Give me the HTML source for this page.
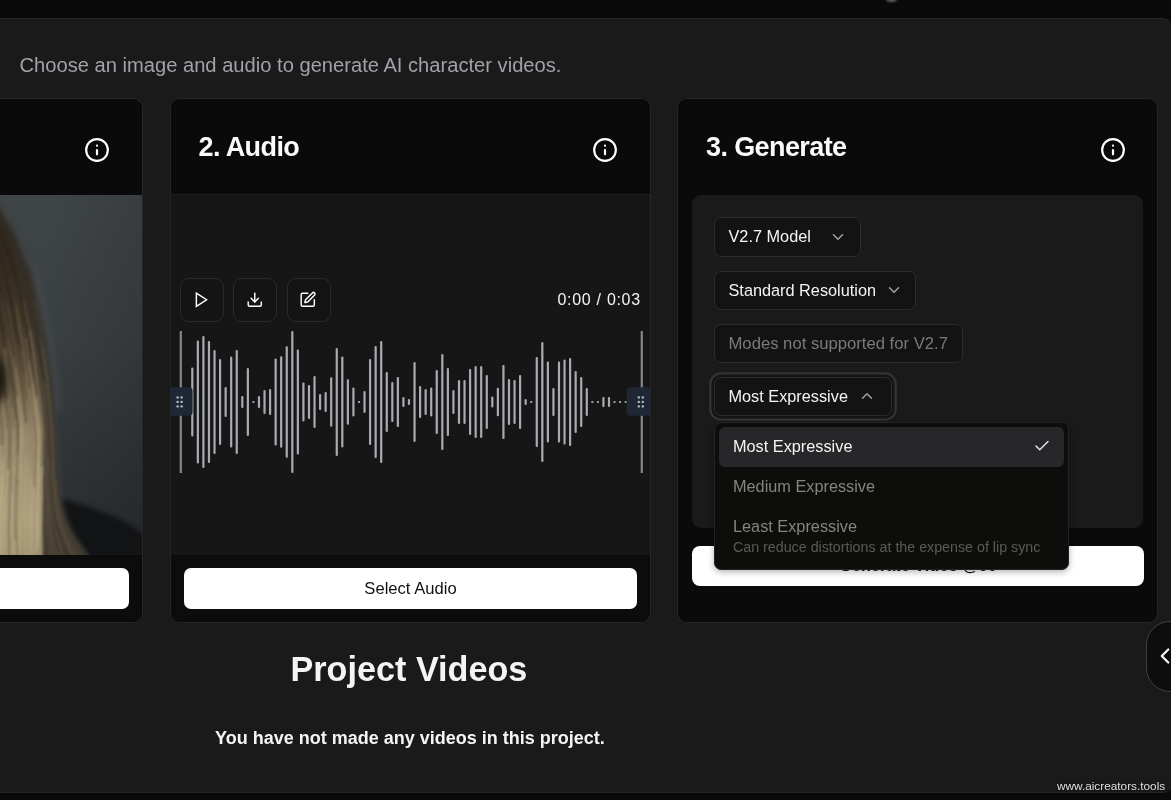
<!DOCTYPE html>
<html><head><meta charset="utf-8">
<style>
*{box-sizing:border-box;margin:0;padding:0}
html,body{width:1171px;height:800px;overflow:hidden;-webkit-font-smoothing:antialiased;background:#0a0a0a;font-family:"Liberation Sans",sans-serif;color:#fff}
.abs{position:absolute}
#main{position:absolute;left:-20px;top:18px;width:1192px;height:775px;background:#1a1a1a;border-top:1px solid #262626;border-bottom:1px solid #242424;border-radius:0 9px 9px 0}
.sub{position:absolute;left:19.5px;top:52.5px;font-size:20.15px;color:#a1a1aa;white-space:nowrap;line-height:24px}
.card{position:absolute;top:98px;width:481px;height:525px;border:1px solid #262626;border-radius:10px;overflow:hidden;background:#0c0c0c}
.hdr{position:absolute;left:0;top:0;right:0;height:95.5px;background:#0a0a0a}
.ttl{position:absolute;top:130.5px;font-size:27px;font-weight:700;letter-spacing:-0.6px;white-space:nowrap;line-height:32px;color:#fafafa}
.foot{position:absolute;left:0;right:0;top:456px;bottom:0;background:#0c0c0c}
.wbtn{position:absolute;left:13px;right:13px;top:13px;height:40.5px;background:#fff;border-radius:7px;color:#111;font-size:16.6px;text-align:center;line-height:41.5px}
.ctl{position:absolute;top:277.5px;width:44px;height:44px;border:1px solid #2a2a2a;border-radius:9px;background:#141414}
.sel{position:absolute;left:714px;height:39.5px;border:1px solid #2c2c2c;border-radius:7px;background:#131313;font-size:16.3px;line-height:37px;padding-left:13.5px;white-space:nowrap;color:#f4f4f5}
.ic{position:absolute;overflow:visible}
</style></head><body>
<div id="root" style="position:absolute;left:0;top:0;width:1171px;height:800px;overflow:hidden;will-change:transform">
<div class="abs" style="left:885.5px;top:-3px;width:11px;height:4.5px;border-radius:50%;background:#5a5f6a;filter:blur(1px)"></div>
<div id="main"></div>
<div class="sub">Choose an image and audio to generate AI character videos.</div>

<!-- Card 1 -->
<div class="card" style="left:-338.5px">
  <div class="hdr"></div>
  <div class="abs" style="left:0;top:96px;width:480px;height:360px;overflow:hidden">
    <svg width="480" height="360" viewBox="0 0 480 360" style="position:absolute;left:0;top:0">
<defs>
<linearGradient id="bgG" x1="0" y1="0" x2="0" y2="1"><stop offset="0" stop-color="#404547"/><stop offset="0.4" stop-color="#3a3f42"/><stop offset="0.75" stop-color="#303437"/><stop offset="1" stop-color="#292c30"/></linearGradient>
<linearGradient id="vigG" x1="0" y1="0" x2="1" y2="0"><stop offset="0.8" stop-color="#000" stop-opacity="0"/><stop offset="1" stop-color="#000" stop-opacity="0.12"/></linearGradient>
<linearGradient id="hairG" gradientUnits="userSpaceOnUse" x1="0" y1="0" x2="0" y2="360"><stop offset="0.000" stop-color="#2c251d"/><stop offset="0.181" stop-color="#33291f"/><stop offset="0.347" stop-color="#463b2c"/><stop offset="0.458" stop-color="#5a4d3a"/><stop offset="0.569" stop-color="#7a6b51"/><stop offset="0.653" stop-color="#94856a"/><stop offset="0.764" stop-color="#a89978"/><stop offset="0.903" stop-color="#b3a480"/><stop offset="1.000" stop-color="#a99a77"/></linearGradient>
<linearGradient id="frG" gradientUnits="userSpaceOnUse" x1="0" y1="0" x2="0" y2="360"><stop offset="0" stop-color="#302a22"/><stop offset="0.5" stop-color="#3a342b"/><stop offset="1" stop-color="#40392e"/></linearGradient>
<filter color-interpolation-filters="sRGB" id="bl1" x="-20%" y="-20%" width="140%" height="140%"><feGaussianBlur stdDeviation="1.3"/></filter>
<filter color-interpolation-filters="sRGB" id="bl2" x="-20%" y="-20%" width="140%" height="140%"><feGaussianBlur stdDeviation="2.4"/></filter>
<filter color-interpolation-filters="sRGB" id="bl05" x="-20%" y="-20%" width="140%" height="140%"><feGaussianBlur stdDeviation="1.2"/></filter>
<filter color-interpolation-filters="sRGB" id="bl3" x="-50%" y="-50%" width="200%" height="200%"><feGaussianBlur stdDeviation="4"/></filter>
<clipPath id="hclip"><path d="M280 -4 L327.5 -4.0 C328.2 -2.7 330.4 1.3 331.9 4.0 C333.4 6.7 334.8 9.3 336.3 12.0 C337.8 14.7 339.4 17.3 341.0 20.0 C342.5 22.7 344.2 25.3 345.9 28.0 C347.5 30.7 349.4 33.3 350.8 36.0 C352.2 38.7 353.2 41.3 354.3 44.0 C355.4 46.7 356.4 49.3 357.4 52.0 C358.4 54.7 359.4 57.3 360.5 60.0 C361.6 62.7 363.0 65.3 364.2 68.0 C365.4 70.7 366.8 73.3 367.7 76.0 C368.6 78.7 368.9 81.3 369.5 84.0 C370.1 86.7 370.7 89.3 371.3 92.0 C371.9 94.7 372.5 97.3 373.1 100.0 C373.7 102.7 374.3 105.3 374.9 108.0 C375.5 110.7 376.1 113.3 376.7 116.0 C377.3 118.7 377.8 121.3 378.3 124.0 C378.8 126.7 379.4 129.3 379.9 132.0 C380.4 134.7 381.0 137.3 381.5 140.0 C382.0 142.7 382.6 145.3 383.1 148.0 C383.6 150.7 384.0 153.3 384.4 156.0 C384.8 158.7 385.1 161.3 385.5 164.0 C385.9 166.7 386.3 169.3 386.6 172.0 C387.0 174.7 387.4 177.3 387.8 180.0 C388.1 182.7 388.5 185.3 388.7 188.0 C389.0 190.7 389.2 193.3 389.4 196.0 C389.6 198.7 389.8 201.3 390.0 204.0 C390.2 206.7 390.4 209.3 390.7 212.0 C390.9 214.7 391.1 217.3 391.3 220.0 C391.5 222.7 391.7 225.3 391.9 228.0 C392.1 230.7 392.4 233.3 392.6 236.0 C392.7 238.7 392.9 241.3 393.0 244.0 C393.2 246.7 393.4 249.3 393.5 252.0 C393.7 254.7 393.8 257.3 394.0 260.0 C394.2 262.7 394.3 265.3 394.5 268.0 C394.6 270.7 394.8 273.3 395.0 276.0 C395.1 278.7 395.2 281.3 395.4 284.0 C395.7 286.7 396.0 289.3 396.3 292.0 C396.6 294.7 397.0 297.3 397.3 300.0 C397.6 302.7 397.8 305.3 398.3 308.0 C398.8 310.7 399.6 313.3 400.3 316.0 C401.0 318.7 401.8 321.3 402.7 324.0 C403.6 326.7 404.4 329.3 405.7 332.0 C407.0 334.7 408.8 337.3 410.4 340.0 C412.0 342.7 413.4 345.3 415.2 348.0 C417.0 350.7 419.4 353.3 421.1 356.0 C422.8 358.7 424.8 362.7 425.5 364.0 L280 366 Z"/></clipPath>
</defs>
<rect width="480" height="360" fill="url(#bgG)"/>
<rect width="480" height="360" fill="url(#vigG)"/>
<path d="M393 303 C410 306 430 313 452 322 C466 328 476 335 482 342 L482 362 L412 362 C406 340 398 320 393 303Z" fill="#121315" filter="url(#bl2)"/>
<path d="M280 -4 L329.5 -4.0 C330.2 -2.7 332.4 1.3 333.9 4.0 C335.4 6.7 336.8 9.3 338.3 12.0 C339.8 14.7 341.4 17.3 343.0 20.0 C344.5 22.7 346.2 25.3 347.9 28.0 C349.5 30.7 351.4 33.3 352.8 36.0 C354.2 38.7 355.2 41.3 356.3 44.0 C357.4 46.7 358.4 49.3 359.4 52.0 C360.4 54.7 360.4 57.3 362.5 60.0 C364.6 62.7 370.0 65.3 372.2 68.0 C374.4 70.7 374.8 73.3 375.7 76.0 C376.6 78.7 376.9 81.3 377.5 84.0 C378.1 86.7 378.7 89.3 379.3 92.0 C379.9 94.7 380.5 97.3 381.1 100.0 C381.7 102.7 382.3 105.3 382.9 108.0 C383.5 110.7 384.1 113.3 384.7 116.0 C385.3 118.7 385.8 121.3 386.3 124.0 C386.8 126.7 387.4 129.3 387.9 132.0 C388.4 134.7 389.0 137.3 389.5 140.0 C390.0 142.7 390.6 145.3 391.1 148.0 C391.6 150.7 392.0 153.3 392.4 156.0 C392.8 158.7 393.1 161.3 393.5 164.0 C393.9 166.7 394.3 169.3 394.6 172.0 C395.0 174.7 395.4 177.3 395.8 180.0 C396.1 182.7 396.5 185.3 396.7 188.0 C397.0 190.7 397.2 193.3 397.4 196.0 C397.6 198.7 397.8 201.3 398.0 204.0 C398.2 206.7 399.4 209.3 398.7 212.0 C397.9 214.7 394.1 217.3 393.3 220.0 C392.5 222.7 393.7 225.3 393.9 228.0 C394.1 230.7 394.4 233.3 394.6 236.0 C394.7 238.7 394.9 241.3 395.0 244.0 C395.2 246.7 395.4 249.3 395.5 252.0 C395.7 254.7 395.8 257.3 396.0 260.0 C396.2 262.7 396.3 265.3 396.5 268.0 C396.6 270.7 396.8 273.3 397.0 276.0 C397.1 278.7 397.2 281.3 397.4 284.0 C397.7 286.7 398.0 289.3 398.3 292.0 C398.6 294.7 399.0 297.3 399.3 300.0 C399.6 302.7 399.8 305.3 400.3 308.0 C400.8 310.7 401.6 313.3 402.3 316.0 C403.0 318.7 403.8 321.3 404.7 324.0 C405.6 326.7 406.4 329.3 407.7 332.0 C409.0 334.7 410.8 337.3 412.4 340.0 C414.0 342.7 415.4 345.3 417.2 348.0 C419.0 350.7 421.4 353.3 423.1 356.0 C424.8 358.7 426.8 362.7 427.5 364.0 L280 366 Z" fill="#4a4e4f" opacity="0.45" filter="url(#bl2)"/>
<path d="M280 -4 L327.5 -4.0 C328.2 -2.7 330.4 1.3 331.9 4.0 C333.4 6.7 334.8 9.3 336.3 12.0 C337.8 14.7 339.4 17.3 341.0 20.0 C342.5 22.7 344.2 25.3 345.9 28.0 C347.5 30.7 349.4 33.3 350.8 36.0 C352.2 38.7 353.2 41.3 354.3 44.0 C355.4 46.7 356.4 49.3 357.4 52.0 C358.4 54.7 359.4 57.3 360.5 60.0 C361.6 62.7 363.0 65.3 364.2 68.0 C365.4 70.7 366.8 73.3 367.7 76.0 C368.6 78.7 368.9 81.3 369.5 84.0 C370.1 86.7 370.7 89.3 371.3 92.0 C371.9 94.7 372.5 97.3 373.1 100.0 C373.7 102.7 374.3 105.3 374.9 108.0 C375.5 110.7 376.1 113.3 376.7 116.0 C377.3 118.7 377.8 121.3 378.3 124.0 C378.8 126.7 379.4 129.3 379.9 132.0 C380.4 134.7 381.0 137.3 381.5 140.0 C382.0 142.7 382.6 145.3 383.1 148.0 C383.6 150.7 384.0 153.3 384.4 156.0 C384.8 158.7 385.1 161.3 385.5 164.0 C385.9 166.7 386.3 169.3 386.6 172.0 C387.0 174.7 387.4 177.3 387.8 180.0 C388.1 182.7 388.5 185.3 388.7 188.0 C389.0 190.7 389.2 193.3 389.4 196.0 C389.6 198.7 389.8 201.3 390.0 204.0 C390.2 206.7 390.4 209.3 390.7 212.0 C390.9 214.7 391.1 217.3 391.3 220.0 C391.5 222.7 391.7 225.3 391.9 228.0 C392.1 230.7 392.4 233.3 392.6 236.0 C392.7 238.7 392.9 241.3 393.0 244.0 C393.2 246.7 393.4 249.3 393.5 252.0 C393.7 254.7 393.8 257.3 394.0 260.0 C394.2 262.7 394.3 265.3 394.5 268.0 C394.6 270.7 394.8 273.3 395.0 276.0 C395.1 278.7 395.2 281.3 395.4 284.0 C395.7 286.7 396.0 289.3 396.3 292.0 C396.6 294.7 397.0 297.3 397.3 300.0 C397.6 302.7 397.8 305.3 398.3 308.0 C398.8 310.7 399.6 313.3 400.3 316.0 C401.0 318.7 401.8 321.3 402.7 324.0 C403.6 326.7 404.4 329.3 405.7 332.0 C407.0 334.7 408.8 337.3 410.4 340.0 C412.0 342.7 413.4 345.3 415.2 348.0 C417.0 350.7 419.4 353.3 421.1 356.0 C422.8 358.7 424.8 362.7 425.5 364.0 L280 366 Z" fill="url(#frG)" filter="url(#bl2)"/>
<path d="M280 -4 L324.4 -4.0 C324.8 -2.7 326.2 1.3 327.1 4.0 C328.1 6.7 329.2 9.3 330.3 12.0 C331.4 14.7 332.4 17.3 333.5 20.0 C334.6 22.7 335.6 25.3 336.7 28.0 C337.8 30.7 338.8 33.3 339.9 36.0 C341.0 38.7 342.0 41.3 343.1 44.0 C344.2 46.7 345.3 49.3 346.3 52.0 C347.3 54.7 348.2 57.3 349.1 60.0 C350.0 62.7 350.8 65.3 351.7 68.0 C352.5 70.7 353.4 73.3 354.2 76.0 C355.0 78.7 355.7 81.3 356.4 84.0 C357.1 86.7 357.6 89.3 358.2 92.0 C358.9 94.7 359.5 97.3 360.1 100.0 C360.7 102.7 361.3 105.3 361.9 108.0 C362.5 110.7 363.1 113.3 363.7 116.0 C364.2 118.7 364.6 121.3 365.1 124.0 C365.5 126.7 366.0 129.3 366.5 132.0 C366.9 134.7 367.4 137.3 367.9 140.0 C368.3 142.7 368.8 145.3 369.3 148.0 C369.7 150.7 370.2 153.3 370.6 156.0 C371.1 158.7 371.4 161.3 371.8 164.0 C372.1 166.7 372.5 169.3 372.9 172.0 C373.3 174.7 373.6 177.3 374.0 180.0 C374.4 182.7 374.7 185.3 375.1 188.0 C375.5 190.7 375.9 193.3 376.2 196.0 C376.6 198.7 377.0 201.3 377.4 204.0 C377.7 206.7 377.9 209.3 378.2 212.0 C378.5 214.7 378.7 217.3 379.0 220.0 C379.3 222.7 379.6 225.3 379.8 228.0 C380.0 230.7 380.4 233.3 380.5 236.0 C380.6 238.7 380.4 241.3 380.3 244.0 C380.3 246.7 380.2 249.3 380.2 252.0 C380.1 254.7 380.1 257.3 380.0 260.0 C379.9 262.7 379.9 265.3 379.8 268.0 C379.8 270.7 379.7 273.3 379.7 276.0 C379.6 278.7 379.6 281.3 379.5 284.0 C379.5 286.7 379.4 289.3 379.3 292.0 C379.3 294.7 379.2 297.3 379.1 300.0 C379.1 302.7 379.0 305.3 378.9 308.0 C378.9 310.7 378.8 313.3 378.7 316.0 C378.7 318.7 378.6 321.3 378.5 324.0 C378.5 326.7 378.5 329.3 378.5 332.0 C378.5 334.7 378.5 337.3 378.5 340.0 C378.5 342.7 378.5 345.3 378.5 348.0 C378.5 350.7 378.5 353.3 378.5 356.0 C378.5 358.7 378.5 362.7 378.5 364.0 L280 366 Z" fill="url(#hairG)" filter="url(#bl2)"/>
<g filter="url(#bl05)" fill="none" stroke-linecap="round" clip-path="url(#hclip)">
<path d="M351.3 163.5 C351.9 168.0 353.9 181.5 355.1 190.5 C356.3 199.5 357.7 208.4 358.5 217.4 C359.2 226.4 359.5 235.4 359.6 244.4 C359.8 253.4 359.5 262.3 359.4 271.3 C359.3 280.3 359.1 289.3 358.9 298.3 C358.8 307.2 358.6 316.2 358.4 325.2 C358.2 334.2 357.9 347.7 357.7 352.2" stroke="rgb(200,182,145)" stroke-width="2.3" opacity="0.22"/>
<path d="M296.1 3.0 C297.9 7.7 303.3 21.8 306.9 31.2 C310.5 40.6 314.7 50.0 317.8 59.4 C320.9 68.8 323.3 78.2 325.7 87.6 C328.0 96.9 330.0 106.3 331.9 115.7 C333.9 125.1 335.8 134.5 337.4 143.9 C338.9 153.3 339.9 162.7 341.3 172.1 C342.6 181.5 344.6 195.6 345.3 200.3" stroke="rgb(82,69,53)" stroke-width="1.7" opacity="0.21"/>
<path d="M360.5 251.2 C360.4 253.9 360.1 262.1 360.0 267.6 C359.9 273.0 360.0 278.5 359.9 284.0 C359.7 289.4 359.4 294.9 359.2 300.4 C359.0 305.8 358.7 311.3 358.7 316.8 C358.6 322.2 359.1 327.7 359.2 333.2 C359.3 338.7 359.2 344.1 359.2 349.6 C359.1 355.1 359.0 363.3 359.0 366.0" stroke="rgb(105,96,75)" stroke-width="1.3" opacity="0.27"/>
<path d="M317.1 11.8 C318.7 15.7 323.9 27.5 327.0 35.3 C330.1 43.2 332.9 51.0 335.6 58.9 C338.4 66.8 341.3 74.6 343.5 82.5 C345.7 90.3 347.3 98.2 348.8 106.0 C350.3 113.9 351.2 121.7 352.5 129.6 C353.9 137.4 355.5 145.3 356.9 153.1 C358.3 161.0 360.3 172.8 360.9 176.7" stroke="rgb(36,29,22)" stroke-width="1.6" opacity="0.42"/>
<path d="M371.2 185.1 C371.7 189.1 373.3 201.0 374.2 209.0 C375.1 216.9 376.3 224.8 376.8 232.8 C377.3 240.7 377.3 248.7 377.2 256.6 C377.2 264.5 376.9 272.5 376.6 280.4 C376.2 288.4 375.6 296.3 375.3 304.3 C375.1 312.2 375.0 320.1 375.0 328.1 C374.9 336.0 374.8 347.9 374.8 351.9" stroke="rgb(207,188,149)" stroke-width="1.2" opacity="0.38"/>
<path d="M341.0 128.7 C341.2 130.6 341.7 136.2 342.3 139.9 C343.0 143.7 344.2 147.4 344.8 151.2 C345.4 154.9 345.5 158.6 346.0 162.4 C346.5 166.1 347.3 169.9 347.9 173.6 C348.4 177.4 348.7 181.1 349.2 184.8 C349.7 188.6 350.2 192.3 350.9 196.1 C351.5 199.8 352.7 205.4 353.0 207.3" stroke="rgb(55,47,35)" stroke-width="2.4" opacity="0.27"/>
<path d="M353.5 112.2 C354.2 116.5 356.1 129.2 357.6 137.7 C359.1 146.2 361.3 154.6 362.6 163.1 C364.0 171.6 364.4 180.1 365.4 188.6 C366.4 197.1 367.7 205.5 368.7 214.0 C369.6 222.5 370.9 231.0 371.2 239.5 C371.5 248.0 370.5 256.4 370.2 264.9 C370.0 273.4 369.8 286.1 369.7 290.4" stroke="rgb(151,133,102)" stroke-width="1.9" opacity="0.22"/>
<path d="M362.5 176.4 C363.0 178.9 364.4 186.5 365.1 191.5 C365.8 196.5 366.2 201.6 366.7 206.6 C367.2 211.6 367.8 216.7 368.3 221.7 C368.8 226.8 369.8 231.8 369.9 236.8 C370.0 241.9 369.1 246.9 368.9 251.9 C368.7 257.0 368.6 262.0 368.6 267.0 C368.6 272.1 369.0 279.6 369.0 282.2" stroke="rgb(85,76,60)" stroke-width="1.2" opacity="0.25"/>
<path d="M346.7 281.5 C346.7 283.4 346.6 289.1 346.4 292.9 C346.3 296.7 346.0 300.5 345.8 304.2 C345.7 308.0 345.6 311.8 345.4 315.6 C345.2 319.4 344.9 323.2 344.8 326.9 C344.7 330.7 344.6 334.5 344.8 338.3 C344.9 342.1 345.7 345.9 345.7 349.7 C345.7 353.4 345.1 359.1 345.0 361.0" stroke="rgb(106,97,76)" stroke-width="2.3" opacity="0.26"/>
<path d="M329.1 81.0 C329.4 82.8 330.2 88.2 330.9 91.9 C331.7 95.5 332.7 99.1 333.6 102.8 C334.5 106.4 335.6 110.0 336.4 113.7 C337.3 117.3 338.0 120.9 338.7 124.6 C339.3 128.2 339.8 131.8 340.4 135.5 C340.9 139.1 341.3 142.7 341.9 146.4 C342.6 150.0 344.0 155.5 344.4 157.3" stroke="rgb(89,75,58)" stroke-width="1.4" opacity="0.20"/>
<path d="M308.8 8.7 C309.6 10.6 312.0 16.0 313.4 19.7 C314.8 23.3 315.9 26.9 317.3 30.6 C318.7 34.2 320.3 37.9 321.9 41.5 C323.5 45.1 325.4 48.8 326.8 52.4 C328.3 56.1 329.4 59.7 330.6 63.3 C331.8 67.0 332.7 70.6 333.8 74.3 C334.8 77.9 336.3 83.4 336.8 85.2" stroke="rgb(29,23,18)" stroke-width="1.0" opacity="0.23"/>
<path d="M379.4 272.2 C379.2 274.4 378.4 281.1 378.2 285.6 C378.0 290.0 378.5 294.5 378.5 299.0 C378.4 303.4 378.1 307.9 378.0 312.4 C377.9 316.8 378.0 321.3 377.9 325.8 C377.8 330.3 377.5 334.7 377.5 339.2 C377.6 343.7 378.2 348.1 378.2 352.6 C378.2 357.1 377.4 363.8 377.3 366.0" stroke="rgb(222,204,161)" stroke-width="2.4" opacity="0.36"/>
<path d="M345.1 208.1 C345.3 211.9 346.4 223.2 346.8 230.7 C347.1 238.2 347.1 245.7 347.2 253.2 C347.2 260.8 347.0 268.3 346.9 275.8 C346.8 283.3 346.6 290.8 346.4 298.3 C346.1 305.9 345.5 313.4 345.4 320.9 C345.2 328.4 345.6 335.9 345.6 343.4 C345.7 351.0 345.7 362.2 345.7 366.0" stroke="rgb(102,93,73)" stroke-width="1.5" opacity="0.34"/>
<path d="M347.7 178.7 C348.0 180.2 348.9 184.7 349.3 187.6 C349.8 190.6 350.1 193.5 350.5 196.5 C350.8 199.4 351.3 202.4 351.5 205.3 C351.8 208.3 351.8 211.2 352.1 214.2 C352.4 217.1 353.0 220.1 353.3 223.1 C353.6 226.0 353.9 229.0 354.1 231.9 C354.2 234.9 354.1 239.3 354.1 240.8" stroke="rgb(75,66,50)" stroke-width="2.2" opacity="0.22"/>
<path d="M371.9 176.4 C372.4 179.3 374.0 188.0 374.8 193.8 C375.6 199.7 376.1 205.5 376.8 211.3 C377.4 217.1 378.2 222.9 378.6 228.7 C379.1 234.6 379.4 240.4 379.4 246.2 C379.3 252.0 378.6 257.8 378.3 263.6 C378.1 269.5 377.9 275.3 377.7 281.1 C377.6 286.9 377.6 295.6 377.6 298.5" stroke="rgb(89,80,64)" stroke-width="1.2" opacity="0.24"/>
<path d="M335.7 194.6 C335.9 197.4 336.6 205.7 337.2 211.2 C337.8 216.7 338.8 222.3 339.2 227.8 C339.5 233.4 339.3 238.9 339.3 244.4 C339.2 250.0 339.2 255.5 339.2 261.0 C339.1 266.6 339.2 272.1 339.2 277.7 C339.2 283.2 339.0 288.7 338.9 294.3 C338.8 299.8 338.6 308.1 338.5 310.9" stroke="rgb(197,179,142)" stroke-width="1.4" opacity="0.33"/>
<path d="M362.8 143.9 C363.4 148.1 365.3 160.6 366.5 169.0 C367.8 177.3 369.3 185.7 370.3 194.1 C371.3 202.4 372.0 210.8 372.6 219.1 C373.2 227.5 373.7 235.9 373.9 244.2 C374.0 252.6 373.8 260.9 373.6 269.3 C373.5 277.7 373.1 286.0 372.9 294.4 C372.7 302.7 372.3 315.3 372.2 319.5" stroke="rgb(183,164,131)" stroke-width="1.7" opacity="0.34"/>
<path d="M366.0 250.1 C365.8 252.9 365.4 261.2 365.2 266.7 C365.1 272.2 364.9 277.7 364.9 283.2 C364.9 288.8 365.4 294.3 365.3 299.8 C365.2 305.3 364.2 310.8 364.1 316.3 C363.9 321.9 364.5 327.4 364.5 332.9 C364.6 338.4 364.4 343.9 364.4 349.4 C364.3 355.0 364.2 363.2 364.1 366.0" stroke="rgb(105,96,75)" stroke-width="1.1" opacity="0.20"/>
<path d="M304.2 -2.3 C305.8 1.8 310.5 14.3 313.7 22.6 C316.9 30.9 320.4 39.2 323.6 47.5 C326.8 55.8 330.2 64.1 332.7 72.4 C335.3 80.7 337.0 89.0 338.9 97.4 C340.9 105.7 342.8 114.0 344.4 122.3 C346.1 130.6 347.4 138.9 348.8 147.2 C350.2 155.5 352.1 168.0 352.7 172.1" stroke="rgb(34,28,21)" stroke-width="1.2" opacity="0.35"/>
<path d="M322.2 45.4 C322.8 46.6 324.6 50.3 325.4 52.8 C326.3 55.2 326.7 57.7 327.4 60.1 C328.2 62.6 329.1 65.1 329.9 67.5 C330.7 70.0 331.5 72.4 332.3 74.9 C333.2 77.3 334.2 79.8 334.8 82.3 C335.5 84.7 335.8 87.2 336.3 89.6 C336.9 92.1 337.8 95.8 338.1 97.0" stroke="rgb(31,25,19)" stroke-width="2.2" opacity="0.29"/>
<path d="M291.8 17.0 C293.5 21.6 298.7 35.1 302.0 44.2 C305.4 53.2 309.0 62.2 311.9 71.3 C314.7 80.3 316.9 89.4 319.1 98.4 C321.2 107.5 323.3 116.5 325.0 125.5 C326.7 134.6 327.8 143.6 329.2 152.7 C330.6 161.7 331.9 170.8 333.3 179.8 C334.6 188.8 336.6 202.4 337.3 206.9" stroke="rgb(39,33,24)" stroke-width="1.7" opacity="0.41"/>
<path d="M317.9 53.5 C319.1 57.3 323.0 68.6 325.1 76.1 C327.2 83.7 329.0 91.2 330.7 98.7 C332.3 106.3 333.5 113.8 335.0 121.4 C336.5 128.9 338.3 136.4 339.7 144.0 C341.0 151.5 342.2 159.0 343.3 166.6 C344.4 174.1 345.5 181.7 346.5 189.2 C347.4 196.7 348.5 208.0 348.9 211.8" stroke="rgb(44,37,28)" stroke-width="2.4" opacity="0.27"/>
<path d="M321.1 98.0 C321.4 99.5 322.5 104.0 323.2 107.0 C323.9 109.9 324.8 112.9 325.4 115.9 C326.0 118.8 326.3 121.8 326.7 124.8 C327.1 127.8 327.2 130.7 327.8 133.7 C328.4 136.7 329.6 139.6 330.1 142.6 C330.7 145.6 330.5 148.6 330.9 151.5 C331.4 154.5 332.7 159.0 333.1 160.5" stroke="rgb(93,80,61)" stroke-width="2.2" opacity="0.27"/>
<path d="M333.8 36.1 C335.1 39.1 339.0 48.2 341.2 54.3 C343.4 60.4 345.2 66.4 347.0 72.5 C348.8 78.6 350.6 84.7 352.1 90.7 C353.5 96.8 354.5 102.9 355.8 108.9 C357.1 115.0 358.7 121.1 359.8 127.1 C360.8 133.2 361.2 139.3 362.1 145.4 C363.0 151.4 364.6 160.5 365.1 163.6" stroke="rgb(37,30,23)" stroke-width="2.1" opacity="0.26"/>
<path d="M341.3 152.1 C341.9 156.3 343.5 168.9 344.7 177.3 C345.8 185.7 347.2 194.1 348.3 202.5 C349.4 210.9 350.8 219.3 351.4 227.7 C352.0 236.1 351.9 244.5 351.8 252.9 C351.7 261.4 350.8 269.8 350.6 278.2 C350.4 286.6 350.7 295.0 350.6 303.4 C350.6 311.8 350.3 324.4 350.2 328.6" stroke="rgb(189,171,137)" stroke-width="1.2" opacity="0.33"/>
<path d="M344.3 146.0 C345.0 149.3 347.3 159.4 348.4 166.1 C349.5 172.8 349.9 179.5 350.8 186.2 C351.6 192.9 352.6 199.6 353.4 206.3 C354.3 213.0 355.4 219.7 355.8 226.4 C356.3 233.1 356.2 239.8 356.2 246.5 C356.2 253.2 355.9 260.0 355.7 266.7 C355.6 273.4 355.6 283.4 355.5 286.8" stroke="rgb(166,148,116)" stroke-width="1.6" opacity="0.32"/>
<path d="M336.6 276.3 C336.5 278.4 336.1 284.8 336.0 289.1 C335.9 293.4 335.9 297.6 336.0 301.9 C336.0 306.2 336.0 310.4 336.0 314.7 C336.0 319.0 335.9 323.3 335.8 327.5 C335.7 331.8 335.5 336.1 335.4 340.4 C335.3 344.6 335.3 348.9 335.3 353.2 C335.2 357.5 335.2 363.9 335.1 366.0" stroke="rgb(106,97,76)" stroke-width="1.1" opacity="0.40"/>
<path d="M289.4 -2.9 C290.1 -1.1 292.5 4.6 294.0 8.4 C295.4 12.1 296.7 15.9 298.1 19.7 C299.6 23.4 301.1 27.2 302.7 31.0 C304.2 34.7 306.0 38.5 307.5 42.3 C308.9 46.0 310.1 49.8 311.5 53.6 C312.9 57.3 314.6 61.1 315.8 64.9 C317.1 68.6 318.3 74.3 318.8 76.2" stroke="rgb(28,23,18)" stroke-width="1.2" opacity="0.26"/>
<path d="M341.4 125.4 C341.8 127.9 343.3 135.5 344.1 140.6 C345.0 145.7 345.7 150.7 346.4 155.8 C347.1 160.9 347.8 165.9 348.6 171.0 C349.4 176.0 350.3 181.1 351.1 186.2 C351.9 191.2 352.6 196.3 353.3 201.4 C353.9 206.4 354.3 211.5 354.8 216.6 C355.4 221.6 356.4 229.2 356.7 231.8" stroke="rgb(60,52,39)" stroke-width="1.3" opacity="0.39"/>
<path d="M346.9 241.3 C346.8 244.2 346.5 253.1 346.5 259.1 C346.5 265.0 346.9 271.0 346.8 276.9 C346.6 282.8 345.8 288.8 345.6 294.7 C345.5 300.7 346.0 306.6 346.0 312.5 C346.0 318.5 345.7 324.4 345.6 330.4 C345.4 336.3 344.9 342.2 344.8 348.2 C344.7 354.1 344.9 363.0 344.9 366.0" stroke="rgb(104,95,74)" stroke-width="1.1" opacity="0.26"/>
<path d="M326.7 120.7 C327.4 124.7 329.7 136.8 331.2 144.8 C332.6 152.8 334.1 160.8 335.2 168.8 C336.3 176.9 336.9 184.9 337.9 192.9 C338.8 200.9 340.1 209.0 341.0 217.0 C341.8 225.0 342.8 233.0 343.1 241.1 C343.4 249.1 343.0 257.1 342.9 265.1 C342.7 273.1 342.5 285.2 342.4 289.2" stroke="rgb(154,136,104)" stroke-width="2.2" opacity="0.31"/>
<path d="M354.1 202.6 C354.3 204.4 355.0 210.0 355.4 213.8 C355.7 217.5 356.0 221.2 356.4 224.9 C356.8 228.7 357.7 232.4 357.9 236.1 C358.1 239.9 357.7 243.6 357.6 247.3 C357.6 251.1 357.6 254.8 357.5 258.5 C357.3 262.3 357.0 266.0 356.8 269.7 C356.7 273.5 356.7 279.0 356.6 280.9" stroke="rgb(190,172,138)" stroke-width="2.6" opacity="0.38"/>
<path d="M292.1 19.5 C292.5 20.9 293.9 25.2 295.0 28.0 C296.0 30.8 297.5 33.6 298.6 36.5 C299.7 39.3 300.5 42.1 301.6 44.9 C302.7 47.8 304.1 50.6 305.1 53.4 C306.2 56.2 307.1 59.1 308.0 61.9 C308.9 64.7 309.7 67.5 310.6 70.3 C311.5 73.2 313.0 77.4 313.5 78.8" stroke="rgb(66,54,43)" stroke-width="2.3" opacity="0.35"/>
<path d="M358.0 130.7 C358.6 134.6 360.6 146.0 361.8 153.7 C363.0 161.4 363.9 169.0 365.0 176.7 C366.2 184.4 367.7 192.0 368.6 199.7 C369.5 207.3 370.0 215.0 370.6 222.7 C371.3 230.3 372.3 238.0 372.5 245.7 C372.7 253.3 372.2 261.0 372.0 268.6 C371.8 276.3 371.5 287.8 371.4 291.6" stroke="rgb(76,67,51)" stroke-width="1.6" opacity="0.34"/>
<path d="M342.3 146.3 C342.9 151.0 344.6 165.1 346.0 174.5 C347.4 183.9 349.4 193.3 350.6 202.7 C351.8 212.1 352.9 221.5 353.4 230.9 C353.8 240.3 353.4 249.7 353.3 259.1 C353.2 268.5 353.0 277.9 352.8 287.3 C352.5 296.7 351.8 306.1 351.7 315.5 C351.5 324.9 351.9 339.0 351.9 343.7" stroke="rgb(91,82,65)" stroke-width="2.2" opacity="0.35"/>
<path d="M328.8 115.8 C329.5 119.6 331.7 130.9 333.0 138.4 C334.4 146.0 335.8 153.5 336.9 161.0 C338.0 168.6 338.6 176.1 339.6 183.7 C340.6 191.2 342.0 198.7 343.0 206.3 C344.1 213.8 345.1 221.4 345.6 228.9 C346.1 236.5 346.0 244.0 345.9 251.5 C345.8 259.1 345.2 270.4 345.0 274.2" stroke="rgb(68,59,45)" stroke-width="1.5" opacity="0.35"/>
<path d="M342.3 166.6 C342.9 169.7 344.6 178.9 345.5 185.1 C346.4 191.3 347.1 197.5 347.8 203.7 C348.5 209.9 349.2 216.1 349.7 222.3 C350.3 228.5 350.8 234.6 351.0 240.8 C351.1 247.0 351.0 253.2 350.8 259.4 C350.6 265.6 349.7 271.8 349.5 278.0 C349.3 284.2 349.6 293.4 349.6 296.5" stroke="rgb(87,78,61)" stroke-width="1.6" opacity="0.26"/>
<path d="M343.1 50.6 C344.0 53.1 346.6 60.7 348.4 65.8 C350.2 70.8 352.4 75.9 353.9 81.0 C355.3 86.0 355.9 91.1 357.0 96.2 C358.1 101.2 359.3 106.3 360.4 111.4 C361.5 116.4 362.8 121.5 363.7 126.6 C364.6 131.6 365.1 136.7 366.0 141.7 C366.9 146.8 368.5 154.4 369.0 156.9" stroke="rgb(37,31,23)" stroke-width="1.0" opacity="0.38"/>
<path d="M353.1 225.4 C353.1 226.7 353.1 230.8 353.1 233.5 C353.2 236.2 353.5 238.9 353.5 241.6 C353.4 244.3 353.0 247.0 353.0 249.7 C352.9 252.4 353.1 255.1 353.2 257.8 C353.2 260.5 353.2 263.2 353.1 265.9 C353.0 268.6 352.4 271.3 352.4 274.0 C352.4 276.7 353.0 280.8 353.1 282.1" stroke="rgb(197,179,143)" stroke-width="1.9" opacity="0.32"/>
<path d="M338.7 78.6 C339.4 82.1 341.7 92.7 343.4 99.8 C345.0 106.8 346.9 113.9 348.3 120.9 C349.7 128.0 350.5 135.1 351.6 142.1 C352.7 149.2 353.7 156.2 354.7 163.3 C355.8 170.4 356.9 177.4 357.9 184.5 C358.9 191.5 359.8 198.6 360.7 205.7 C361.5 212.7 362.5 223.3 362.9 226.8" stroke="rgb(50,42,32)" stroke-width="2.4" opacity="0.29"/>
<path d="M294.5 5.5 C296.2 10.3 301.3 24.4 304.9 33.9 C308.6 43.3 313.3 52.8 316.5 62.2 C319.7 71.7 321.8 81.1 324.2 90.5 C326.5 100.0 328.5 109.4 330.5 118.9 C332.4 128.3 334.4 137.8 335.9 147.2 C337.4 156.6 338.1 166.1 339.4 175.5 C340.7 185.0 343.0 199.1 343.7 203.9" stroke="rgb(38,31,23)" stroke-width="1.7" opacity="0.36"/>
<path d="M335.9 243.2 C335.9 246.1 336.1 254.9 336.1 260.7 C336.0 266.6 335.7 272.4 335.5 278.3 C335.3 284.1 335.1 290.0 334.9 295.8 C334.7 301.7 334.4 307.5 334.3 313.4 C334.2 319.2 334.5 325.1 334.5 330.9 C334.4 336.8 334.1 342.6 334.1 348.5 C334.1 354.3 334.3 363.1 334.4 366.0" stroke="rgb(104,95,74)" stroke-width="1.3" opacity="0.30"/>
<path d="M338.2 120.1 C339.0 124.0 341.5 135.9 342.8 143.9 C344.2 151.8 345.4 159.7 346.5 167.7 C347.7 175.6 348.7 183.6 349.6 191.5 C350.6 199.4 351.4 207.4 352.1 215.3 C352.8 223.2 353.5 231.2 353.8 239.1 C354.2 247.1 354.2 255.0 354.1 262.9 C354.1 270.9 353.6 282.8 353.5 286.7" stroke="rgb(72,63,48)" stroke-width="1.4" opacity="0.28"/>
<path d="M341.2 165.1 C341.7 168.4 343.3 178.3 344.1 184.9 C345.0 191.5 345.6 198.2 346.3 204.8 C347.0 211.4 347.8 218.0 348.4 224.6 C349.0 231.2 349.8 237.8 350.0 244.4 C350.2 251.0 349.7 257.6 349.5 264.2 C349.4 270.8 349.4 277.4 349.1 284.0 C348.8 290.7 348.0 300.6 347.7 303.9" stroke="rgb(186,167,134)" stroke-width="1.6" opacity="0.26"/>
<path d="M305.7 21.8 C307.0 24.9 310.7 34.3 313.2 40.5 C315.8 46.8 318.7 53.0 321.0 59.3 C323.3 65.5 325.1 71.8 326.9 78.0 C328.6 84.3 330.0 90.5 331.4 96.8 C332.8 103.0 334.2 109.3 335.4 115.5 C336.6 121.8 337.7 128.0 338.8 134.3 C339.9 140.5 341.3 149.9 341.8 153.0" stroke="rgb(34,28,21)" stroke-width="2.3" opacity="0.36"/>
<path d="M333.1 27.1 C334.8 31.2 340.2 43.5 343.1 51.6 C346.0 59.8 348.3 67.9 350.6 76.1 C352.9 84.3 354.9 92.4 356.8 100.6 C358.6 108.7 360.1 116.9 361.7 125.1 C363.3 133.2 365.2 141.4 366.5 149.5 C367.8 157.7 368.5 165.9 369.7 174.0 C370.8 182.2 372.8 194.4 373.4 198.5" stroke="rgb(39,33,24)" stroke-width="1.8" opacity="0.27"/>
<path d="M346.0 275.5 C345.9 277.6 345.5 284.1 345.4 288.4 C345.4 292.7 346.0 297.0 345.9 301.3 C345.8 305.6 345.0 309.9 344.8 314.3 C344.5 318.6 344.5 322.9 344.5 327.2 C344.5 331.5 344.9 335.8 345.0 340.1 C345.1 344.4 344.9 348.8 344.9 353.1 C344.9 357.4 345.1 363.8 345.1 366.0" stroke="rgb(223,204,161)" stroke-width="1.0" opacity="0.37"/>
<path d="M366.3 195.3 C366.6 196.7 367.6 201.2 368.0 204.1 C368.4 207.1 368.7 210.1 368.9 213.0 C369.1 216.0 369.2 219.0 369.4 221.9 C369.6 224.9 369.9 227.9 370.1 230.8 C370.3 233.8 370.5 236.8 370.7 239.7 C370.8 242.7 370.9 245.6 370.9 248.6 C370.8 251.6 370.4 256.0 370.3 257.5" stroke="rgb(177,159,126)" stroke-width="1.9" opacity="0.36"/>
<path d="M338.2 281.4 C338.2 283.4 338.4 289.4 338.3 293.5 C338.1 297.5 337.6 301.5 337.5 305.6 C337.3 309.6 337.2 313.6 337.2 317.6 C337.1 321.7 337.0 325.7 337.1 329.7 C337.1 333.8 337.5 337.8 337.6 341.8 C337.7 345.9 337.7 349.9 337.6 353.9 C337.4 357.9 337.0 364.0 336.9 366.0" stroke="rgb(224,205,161)" stroke-width="1.5" opacity="0.28"/>
<path d="M344.7 110.1 C345.1 112.0 346.4 117.7 347.1 121.5 C347.8 125.2 348.2 129.0 348.9 132.8 C349.5 136.6 350.5 140.3 351.1 144.1 C351.8 147.9 352.3 151.7 352.8 155.4 C353.3 159.2 353.5 163.0 354.0 166.8 C354.6 170.5 355.5 174.3 356.2 178.1 C356.8 181.8 357.6 187.5 357.9 189.4" stroke="rgb(106,91,70)" stroke-width="1.8" opacity="0.20"/>
<path d="M347.7 165.9 C348.4 170.6 350.7 184.5 351.7 193.8 C352.8 203.0 353.6 212.3 354.2 221.6 C354.9 230.9 355.6 240.2 355.8 249.5 C356.0 258.8 355.7 268.0 355.5 277.3 C355.2 286.6 354.4 295.9 354.1 305.2 C353.8 314.5 353.6 323.7 353.6 333.0 C353.6 342.3 354.1 356.2 354.3 360.9" stroke="rgb(97,88,69)" stroke-width="2.0" opacity="0.22"/>
<path d="M372.4 221.2 C372.6 224.6 373.4 235.0 373.6 241.9 C373.8 248.8 373.8 255.7 373.7 262.6 C373.7 269.5 373.2 276.4 373.1 283.3 C372.9 290.1 373.0 297.0 372.8 303.9 C372.6 310.8 372.1 317.7 371.9 324.6 C371.8 331.5 371.8 338.4 371.9 345.3 C372.0 352.2 372.4 362.6 372.5 366.0" stroke="rgb(103,94,73)" stroke-width="1.8" opacity="0.31"/>
<path d="M345.4 209.5 C345.9 213.2 347.7 224.4 348.1 231.9 C348.5 239.3 347.9 246.8 347.8 254.2 C347.8 261.7 347.7 269.1 347.6 276.6 C347.4 284.0 347.2 291.5 347.0 298.9 C346.8 306.4 346.6 313.8 346.5 321.3 C346.4 328.7 346.4 336.2 346.4 343.6 C346.5 351.1 346.5 362.3 346.5 366.0" stroke="rgb(102,93,73)" stroke-width="2.1" opacity="0.32"/>
<path d="M328.0 120.7 C328.6 123.4 330.4 131.5 331.5 136.9 C332.5 142.2 333.7 147.6 334.5 153.0 C335.3 158.4 335.6 163.8 336.3 169.2 C336.9 174.5 337.6 179.9 338.3 185.3 C339.0 190.7 339.9 196.1 340.6 201.5 C341.3 206.8 342.0 212.2 342.6 217.6 C343.2 223.0 343.8 231.1 344.1 233.8" stroke="rgb(59,51,39)" stroke-width="1.4" opacity="0.21"/>
<path d="M370.0 190.9 C370.5 194.8 372.0 206.7 372.9 214.6 C373.7 222.6 374.9 230.5 375.2 238.4 C375.6 246.3 375.0 254.3 374.9 262.2 C374.8 270.1 375.0 278.0 374.7 286.0 C374.4 293.9 373.5 301.8 373.3 309.7 C373.0 317.6 373.0 325.6 372.9 333.5 C372.9 341.4 373.0 353.3 373.0 357.3" stroke="rgb(210,192,152)" stroke-width="2.1" opacity="0.25"/>
<path d="M321.9 59.4 C322.5 61.3 324.1 66.8 325.4 70.5 C326.6 74.2 328.4 77.9 329.4 81.6 C330.4 85.3 330.6 89.0 331.5 92.7 C332.3 96.5 333.3 100.2 334.2 103.9 C335.2 107.6 336.3 111.3 337.0 115.0 C337.8 118.7 338.1 122.4 338.7 126.1 C339.2 129.8 340.1 135.3 340.4 137.2" stroke="rgb(36,30,22)" stroke-width="1.5" opacity="0.40"/>
<path d="M354.5 286.7 C354.5 288.6 354.1 294.2 354.1 298.0 C354.1 301.8 354.7 305.6 354.7 309.3 C354.7 313.1 354.4 316.9 354.3 320.7 C354.1 324.4 353.8 328.2 353.8 332.0 C353.7 335.8 353.9 339.6 353.9 343.3 C353.9 347.1 353.9 350.9 353.9 354.7 C353.8 358.4 353.7 364.1 353.6 366.0" stroke="rgb(107,98,76)" stroke-width="1.3" opacity="0.34"/>
<path d="M367.1 136.5 C367.5 139.0 368.9 146.6 369.6 151.6 C370.4 156.7 371.1 161.7 371.8 166.7 C372.4 171.8 372.8 176.8 373.4 181.8 C374.1 186.9 374.9 191.9 375.5 196.9 C376.2 202.0 377.0 207.0 377.5 212.0 C378.1 217.1 378.5 222.1 379.0 227.1 C379.4 232.2 380.0 239.7 380.2 242.3" stroke="rgb(139,122,93)" stroke-width="2.6" opacity="0.34"/>
<path d="M358.9 155.7 C359.0 157.4 359.1 162.6 359.6 166.1 C360.1 169.5 361.2 173.0 361.8 176.5 C362.5 179.9 362.8 183.4 363.3 186.8 C363.8 190.3 364.4 193.7 364.7 197.2 C365.1 200.7 365.0 204.1 365.3 207.6 C365.7 211.0 366.1 214.5 366.6 217.9 C367.0 221.4 367.8 226.6 368.1 228.3" stroke="rgb(142,124,95)" stroke-width="1.7" opacity="0.31"/>
<path d="M329.7 171.9 C330.3 176.1 332.6 188.9 333.7 197.4 C334.8 205.9 335.6 214.4 336.2 222.9 C336.9 231.4 337.6 239.9 337.7 248.4 C337.7 256.9 336.5 265.4 336.3 273.9 C336.1 282.4 336.7 290.9 336.5 299.4 C336.3 307.9 335.4 316.4 335.2 324.9 C335.1 333.4 335.5 346.2 335.5 350.5" stroke="rgb(202,184,146)" stroke-width="2.3" opacity="0.23"/>
<path d="M342.7 86.3 C343.1 87.8 344.2 92.2 344.9 95.1 C345.6 98.0 346.5 101.0 347.2 103.9 C347.8 106.8 348.2 109.7 348.8 112.6 C349.4 115.6 350.3 118.5 350.8 121.4 C351.3 124.3 351.3 127.3 351.8 130.2 C352.2 133.1 353.0 136.0 353.6 139.0 C354.1 141.9 354.9 146.3 355.2 147.7" stroke="rgb(40,33,25)" stroke-width="2.0" opacity="0.38"/>
<path d="M360.8 106.9 C361.6 110.6 364.1 121.8 365.5 129.3 C366.9 136.7 368.2 144.2 369.3 151.6 C370.4 159.1 371.0 166.5 372.1 174.0 C373.3 181.4 375.1 188.9 376.2 196.3 C377.3 203.8 378.1 211.2 378.6 218.7 C379.2 226.1 379.4 233.6 379.5 241.1 C379.7 248.5 379.5 259.7 379.5 263.4" stroke="rgb(135,118,90)" stroke-width="1.8" opacity="0.28"/>
<path d="M345.6 94.6 C346.1 97.2 347.7 105.0 348.7 110.1 C349.7 115.3 350.6 120.5 351.7 125.7 C352.7 130.9 354.0 136.0 354.9 141.2 C355.8 146.4 356.3 151.6 357.2 156.8 C358.0 162.0 359.2 167.1 360.0 172.3 C360.7 177.5 361.1 182.7 361.7 187.9 C362.4 193.1 363.7 200.8 364.1 203.4" stroke="rgb(49,41,31)" stroke-width="1.1" opacity="0.38"/>
<path d="M327.1 19.3 C328.4 22.9 332.5 33.7 335.2 40.9 C338.0 48.1 341.0 55.4 343.5 62.6 C346.0 69.8 348.5 77.0 350.5 84.3 C352.4 91.5 353.8 98.7 355.2 105.9 C356.6 113.1 357.7 120.4 359.0 127.6 C360.2 134.8 361.7 142.0 362.9 149.3 C364.1 156.5 365.5 167.3 366.0 170.9" stroke="rgb(79,67,51)" stroke-width="1.0" opacity="0.29"/>
<path d="M323.5 122.4 C324.1 125.4 325.7 134.4 326.8 140.5 C327.9 146.5 329.0 152.5 329.9 158.6 C330.8 164.6 331.2 170.7 332.0 176.7 C332.8 182.7 333.7 188.8 334.5 194.8 C335.3 200.8 336.2 206.9 336.8 212.9 C337.4 218.9 337.9 225.0 338.2 231.0 C338.5 237.0 338.6 246.1 338.7 249.1" stroke="rgb(63,55,41)" stroke-width="2.2" opacity="0.42"/>
<path d="M343.9 178.7 C344.1 179.9 344.6 183.7 345.0 186.2 C345.4 188.7 346.1 191.2 346.4 193.7 C346.7 196.3 346.6 198.8 346.9 201.3 C347.2 203.8 347.7 206.3 348.1 208.8 C348.4 211.3 348.6 213.9 348.9 216.4 C349.3 218.9 349.7 221.4 350.0 223.9 C350.3 226.4 350.6 230.2 350.8 231.4" stroke="rgb(73,64,48)" stroke-width="2.2" opacity="0.23"/>
<path d="M330.6 160.0 C330.8 162.4 331.5 169.8 332.3 174.7 C333.0 179.6 334.1 184.5 334.9 189.4 C335.7 194.3 336.7 199.2 337.2 204.1 C337.8 209.0 337.8 213.9 338.3 218.7 C338.7 223.6 339.6 228.5 339.9 233.4 C340.2 238.3 340.1 243.2 339.9 248.1 C339.8 253.0 339.2 260.4 339.0 262.8" stroke="rgb(76,67,51)" stroke-width="1.2" opacity="0.34"/>
<path d="M347.4 65.8 C348.3 69.1 351.1 78.8 352.8 85.3 C354.5 91.8 356.4 98.3 357.9 104.8 C359.3 111.3 360.1 117.8 361.2 124.3 C362.4 130.8 363.7 137.3 364.8 143.8 C365.8 150.3 366.5 156.8 367.5 163.3 C368.6 169.8 370.2 176.3 371.1 182.8 C372.0 189.3 372.7 199.0 373.0 202.3" stroke="rgb(44,37,28)" stroke-width="1.9" opacity="0.32"/>
<path d="M328.2 72.0 C329.3 76.4 332.9 89.7 334.8 98.6 C336.8 107.5 338.6 116.3 340.2 125.2 C341.8 134.1 342.9 143.0 344.4 151.8 C345.8 160.7 347.6 169.6 348.9 178.5 C350.2 187.3 351.0 196.2 352.1 205.1 C353.2 214.0 354.9 222.8 355.4 231.7 C355.8 240.6 354.7 253.9 354.6 258.4" stroke="rgb(54,46,34)" stroke-width="1.2" opacity="0.38"/>
<path d="M306.0 13.6 C306.6 14.9 308.8 18.9 309.9 21.5 C311.1 24.1 312.0 26.7 313.0 29.3 C314.0 31.9 314.9 34.5 315.9 37.1 C316.8 39.7 317.6 42.4 318.6 45.0 C319.7 47.6 321.1 50.2 322.1 52.8 C323.2 55.4 324.1 58.0 324.9 60.6 C325.7 63.2 326.7 67.1 327.0 68.4" stroke="rgb(29,23,18)" stroke-width="0.9" opacity="0.38"/>
<path d="M379.5 203.0 C380.0 207.5 381.9 221.1 382.4 230.1 C383.0 239.2 383.0 248.3 383.1 257.3 C383.1 266.4 382.6 275.4 382.6 284.5 C382.7 293.5 382.8 302.6 383.3 311.7 C383.7 320.7 384.2 329.8 385.2 338.8 C386.2 347.9 388.5 361.5 389.1 366.0" stroke="#2e2921" stroke-width="0.8" opacity="0.49"/>
<path d="M389.5 273.3 C389.6 275.8 390.0 283.6 390.3 288.7 C390.5 293.9 390.5 299.0 391.1 304.2 C391.6 309.3 392.5 314.5 393.7 319.6 C394.9 324.8 396.6 329.9 398.5 335.1 C400.4 340.2 403.2 345.4 405.2 350.5 C407.3 355.7 409.8 363.4 410.7 366.0" stroke="#7d7058" stroke-width="1.5" opacity="0.40"/>
<path d="M394.0 284.4 C394.2 286.7 394.6 293.5 395.0 298.0 C395.5 302.5 395.9 307.1 396.9 311.6 C397.8 316.1 399.1 320.7 400.8 325.2 C402.6 329.7 405.0 334.3 407.4 338.8 C409.8 343.3 412.9 347.9 415.4 352.4 C417.8 356.9 420.9 363.7 422.0 366.0" stroke="#7d7058" stroke-width="1.2" opacity="0.26"/>
<path d="M383.1 165.1 C383.7 170.7 385.8 187.4 386.9 198.6 C388.0 209.8 388.9 220.9 389.7 232.1 C390.4 243.2 390.6 254.4 391.4 265.6 C392.1 276.7 392.5 287.9 394.2 299.0 C395.9 310.2 397.7 321.4 401.8 332.5 C405.9 343.7 415.9 360.4 418.7 366.0" stroke="#554b3c" stroke-width="0.8" opacity="0.38"/>
<path d="M380.9 187.3 C381.5 192.2 383.7 207.1 384.6 217.1 C385.5 227.0 386.0 236.9 386.3 246.9 C386.6 256.8 386.3 266.7 386.6 276.6 C386.9 286.6 386.8 296.5 387.9 306.4 C388.9 316.4 390.5 326.3 392.8 336.2 C395.0 346.1 399.9 361.0 401.3 366.0" stroke="#6a5f4c" stroke-width="1.8" opacity="0.47"/>
<path d="M384.9 181.1 C385.4 186.3 387.0 201.7 387.8 211.9 C388.6 222.2 389.1 232.5 389.7 242.8 C390.3 253.0 390.9 263.3 391.6 273.6 C392.3 283.8 392.1 294.1 393.8 304.4 C395.4 314.6 397.8 324.9 401.5 335.2 C405.3 345.5 414.0 360.9 416.5 366.0" stroke="#554b3c" stroke-width="0.8" opacity="0.41"/>
<path d="M370.8 100.1 C372.3 107.5 377.4 129.7 380.0 144.4 C382.6 159.2 384.8 174.0 386.4 188.8 C388.1 203.5 388.8 218.3 389.9 233.1 C391.0 247.8 391.5 262.6 393.1 277.4 C394.6 292.1 394.7 306.9 399.2 321.7 C403.7 336.5 416.6 358.6 420.1 366.0" stroke="#2e2921" stroke-width="1.5" opacity="0.32"/>
<path d="M380.5 200.1 C381.0 204.7 382.7 218.5 383.2 227.7 C383.8 236.9 383.6 246.2 383.8 255.4 C384.1 264.6 384.4 273.8 384.6 283.0 C384.9 292.3 384.6 301.5 385.3 310.7 C385.9 319.9 387.3 329.1 388.6 338.3 C389.9 347.6 392.4 361.4 393.2 366.0" stroke="#6a5f4c" stroke-width="0.9" opacity="0.50"/>
<path d="M381.3 203.9 C381.9 208.4 383.9 222.0 384.6 231.0 C385.2 240.0 385.2 249.0 385.3 258.0 C385.3 267.0 384.6 276.0 384.7 285.0 C384.9 294.0 385.3 303.0 386.1 312.0 C386.8 321.0 387.7 330.0 389.4 339.0 C391.0 348.0 394.8 361.5 395.8 366.0" stroke="#6a5f4c" stroke-width="1.4" opacity="0.34"/>
<path d="M393.6 311.5 C394.0 313.0 395.1 317.6 395.9 320.6 C396.7 323.6 397.4 326.6 398.4 329.7 C399.5 332.7 400.6 335.7 402.0 338.7 C403.4 341.8 405.3 344.8 406.9 347.8 C408.6 350.9 410.7 353.9 412.0 356.9 C413.3 359.9 414.1 364.5 414.6 366.0" stroke="#554b3c" stroke-width="0.9" opacity="0.34"/>
<path d="M376.9 143.2 C377.8 149.4 381.0 168.0 382.6 180.4 C384.2 192.7 385.7 205.1 386.7 217.5 C387.8 229.9 388.5 242.2 389.1 254.6 C389.6 267.0 389.1 279.4 390.2 291.7 C391.3 304.1 392.3 316.5 395.7 328.9 C399.1 341.2 408.1 359.8 410.6 366.0" stroke="#554b3c" stroke-width="1.8" opacity="0.52"/>
<path d="M371.9 149.7 C372.9 155.7 376.1 173.7 377.7 185.8 C379.3 197.8 380.8 209.8 381.5 221.8 C382.3 233.8 382.1 245.8 382.3 257.9 C382.6 269.9 383.0 281.9 383.2 293.9 C383.3 305.9 382.5 317.9 383.4 330.0 C384.3 342.0 387.8 360.0 388.7 366.0" stroke="#6a5f4c" stroke-width="1.4" opacity="0.34"/>
<path d="M383.2 276.7 C383.3 279.2 383.4 286.6 383.5 291.6 C383.7 296.6 384.1 301.5 384.2 306.5 C384.4 311.4 384.2 316.4 384.5 321.4 C384.8 326.3 385.4 331.3 386.2 336.2 C386.9 341.2 388.3 346.2 389.0 351.1 C389.8 356.1 390.6 363.5 390.9 366.0" stroke="#554b3c" stroke-width="1.8" opacity="0.26"/>
<path d="M386.0 265.1 C386.2 267.9 386.7 276.3 386.9 281.9 C387.0 287.5 386.9 293.1 387.1 298.8 C387.2 304.4 387.3 310.0 387.9 315.6 C388.6 321.2 389.6 326.8 390.8 332.4 C392.1 338.0 394.2 343.6 395.7 349.2 C397.2 354.8 399.1 363.2 399.8 366.0" stroke="#7d7058" stroke-width="1.6" opacity="0.41"/>
<path d="M387.3 286.0 C387.4 288.2 387.5 294.9 387.8 299.3 C388.1 303.8 388.7 308.2 389.1 312.7 C389.5 317.1 389.3 321.5 390.2 326.0 C391.0 330.4 392.9 334.9 394.2 339.3 C395.5 343.8 396.7 348.2 397.9 352.7 C399.2 357.1 401.2 363.8 401.8 366.0" stroke="#554b3c" stroke-width="1.4" opacity="0.41"/>
<path d="M383.9 257.5 C383.8 260.6 383.4 269.6 383.4 275.6 C383.4 281.6 383.7 287.7 383.9 293.7 C384.1 299.7 384.3 305.7 384.6 311.8 C384.9 317.8 385.0 323.8 385.6 329.8 C386.2 335.9 387.4 341.9 388.3 347.9 C389.2 353.9 390.6 363.0 391.1 366.0" stroke="#6a5f4c" stroke-width="1.3" opacity="0.51"/>
<path d="M368.9 133.4 C370.0 139.9 373.7 159.2 375.6 172.2 C377.5 185.1 379.3 198.0 380.5 210.9 C381.6 223.9 382.4 236.8 382.7 249.7 C383.1 262.6 382.3 275.5 382.5 288.5 C382.7 301.4 383.0 314.3 383.9 327.2 C384.8 340.2 387.2 359.5 387.8 366.0" stroke="#554b3c" stroke-width="1.3" opacity="0.41"/>
<path d="M379.4 152.4 C380.3 158.3 383.2 176.1 384.5 188.0 C385.9 199.8 386.6 211.7 387.5 223.6 C388.3 235.4 389.0 247.3 389.7 259.2 C390.4 271.0 390.6 282.9 391.9 294.8 C393.2 306.7 394.2 318.5 397.8 330.4 C401.3 342.3 410.7 360.1 413.3 366.0" stroke="#7d7058" stroke-width="0.8" opacity="0.50"/>
<path d="M372.9 156.1 C373.8 161.9 376.7 179.4 378.3 191.1 C379.8 202.7 381.4 214.4 382.2 226.0 C383.0 237.7 382.9 249.4 382.9 261.0 C382.9 272.7 382.1 284.4 382.2 296.0 C382.3 307.7 382.7 319.3 383.6 331.0 C384.6 342.7 387.1 360.2 387.8 366.0" stroke="#554b3c" stroke-width="1.5" opacity="0.54"/>
<path d="M382.2 266.2 C382.1 269.0 381.6 277.3 381.6 282.8 C381.6 288.4 382.1 293.9 382.2 299.5 C382.3 305.0 382.0 310.5 382.2 316.1 C382.4 321.6 383.1 327.2 383.4 332.7 C383.7 338.3 383.6 343.8 384.1 349.4 C384.5 354.9 385.7 363.2 386.0 366.0" stroke="#554b3c" stroke-width="0.8" opacity="0.42"/>
<path d="M388.0 305.8 C388.1 307.5 388.3 312.5 388.7 315.9 C389.0 319.2 389.4 322.5 390.0 325.9 C390.6 329.2 391.7 332.6 392.5 335.9 C393.3 339.3 394.0 342.6 394.9 345.9 C395.9 349.3 397.2 352.6 398.0 356.0 C398.9 359.3 399.6 364.3 400.0 366.0" stroke="#554b3c" stroke-width="1.2" opacity="0.28"/>
<path d="M376.0 167.9 C376.7 173.4 379.2 189.9 380.4 200.9 C381.5 212.0 382.5 223.0 382.9 234.0 C383.4 245.0 382.9 256.0 383.0 267.0 C383.1 278.0 383.1 289.0 383.6 300.0 C384.1 311.0 384.7 322.0 385.8 333.0 C386.9 344.0 389.7 360.5 390.4 366.0" stroke="#554b3c" stroke-width="1.2" opacity="0.37"/>
<path d="M385.2 183.8 C385.5 188.9 386.6 204.1 387.4 214.2 C388.1 224.3 389.1 234.4 389.7 244.6 C390.3 254.7 390.2 264.8 390.9 274.9 C391.5 285.0 391.9 295.2 393.6 305.3 C395.3 315.4 397.4 325.5 401.1 335.6 C404.7 345.8 413.0 360.9 415.4 366.0" stroke="#554b3c" stroke-width="1.4" opacity="0.48"/>
<path d="M383.4 207.8 C383.7 212.2 384.9 225.4 385.3 234.2 C385.8 243.0 385.9 251.8 386.2 260.6 C386.4 269.4 386.4 278.1 386.8 286.9 C387.1 295.7 387.1 304.5 388.1 313.3 C389.1 322.1 390.6 330.9 392.6 339.6 C394.6 348.4 398.9 361.6 400.1 366.0" stroke="#2e2921" stroke-width="1.4" opacity="0.41"/>
<path d="M386.5 212.7 C386.9 216.9 388.2 229.7 388.7 238.2 C389.1 246.7 388.9 255.3 389.2 263.8 C389.4 272.3 389.6 280.8 390.2 289.3 C390.8 297.9 391.0 306.4 392.8 314.9 C394.6 323.4 397.9 331.9 401.1 340.4 C404.2 349.0 410.0 361.7 411.8 366.0" stroke="#554b3c" stroke-width="1.5" opacity="0.47"/>
<path d="M371.3 104.5 C372.8 111.8 377.8 133.5 380.3 148.1 C382.7 162.6 384.3 177.1 386.0 191.7 C387.6 206.2 389.4 220.7 390.4 235.2 C391.4 249.8 390.7 264.3 392.0 278.8 C393.4 293.4 394.1 307.9 398.5 322.4 C402.9 336.9 415.1 358.7 418.4 366.0" stroke="#6a5f4c" stroke-width="1.0" opacity="0.43"/>
</g>
<ellipse cx="335" cy="185" rx="8" ry="22" fill="#181411" filter="url(#bl3)"/>
</svg>
  </div>
  <div class="foot"><div class="wbtn"></div></div>
</div>

<!-- Card 2 -->
<div class="card" style="left:170px">
  <div class="hdr" style="border-bottom:1px solid #1f1f1f;height:96px"></div>
  <div class="abs" style="left:0;top:96px;right:0;height:360px;background:#161616"></div>
  <div class="foot"><div class="wbtn">Select Audio</div></div>
</div>
<div class="ttl" style="left:198.5px">2. Audio</div>

<!-- Card 3 -->
<div class="card" style="left:676.8px;width:481.5px">
  <div class="abs" style="left:0;top:0;right:0;bottom:0;background:#0a0a0a"></div>
  <div class="abs" style="left:14.2px;top:95.5px;width:451.5px;height:333px;background:#1a1a1a;border-radius:9px"></div>
  <div class="abs" style="left:14.2px;top:446.7px;width:452px;height:40.5px;background:#fff;border-radius:8px;color:#111;font-size:16.3px;text-align:center;line-height:38.5px;font-weight:700">Generate Video @90</div>
</div>
<div class="ttl" style="left:706px">3. Generate</div>

<!-- info icons -->
<svg class="ic" style="left:84.2px;top:137px" width="26" height="26" viewBox="0 0 24 24" fill="none" stroke="#fff" stroke-width="2" stroke-linecap="round" stroke-linejoin="round"><circle cx="12" cy="12" r="10"/><path d="M12 16v-4M12 8h.01"/></svg>
<svg class="ic" style="left:592.2px;top:137px" width="26" height="26" viewBox="0 0 24 24" fill="none" stroke="#fff" stroke-width="2" stroke-linecap="round" stroke-linejoin="round"><circle cx="12" cy="12" r="10"/><path d="M12 16v-4M12 8h.01"/></svg>
<svg class="ic" style="left:1100.2px;top:137px" width="26" height="26" viewBox="0 0 24 24" fill="none" stroke="#fff" stroke-width="2" stroke-linecap="round" stroke-linejoin="round"><circle cx="12" cy="12" r="10"/><path d="M12 16v-4M12 8h.01"/></svg>

<!-- audio controls -->
<div class="ctl" style="left:179.5px"></div>
<div class="ctl" style="left:233px"></div>
<div class="ctl" style="left:286.5px"></div>
<svg class="ic" style="left:192.3px;top:291px" width="17.5" height="17.5" viewBox="0 0 24 24" fill="none" stroke="#fff" stroke-width="2" stroke-linejoin="miter"><polygon points="6 3 20 12 6 21 6 3"/></svg>
<svg class="ic" style="left:246.2px;top:291px" width="17.5" height="17.5" viewBox="0 0 24 24" fill="none" stroke="#fff" stroke-width="2" stroke-linecap="round" stroke-linejoin="round"><path d="M21 15v4a2 2 0 0 1-2 2H5a2 2 0 0 1-2-2v-4"/><polyline points="7 10 12 15 17 10"/><line x1="12" x2="12" y1="15" y2="3"/></svg>
<svg class="ic" style="left:299.4px;top:290.6px" width="17.5" height="17.5" viewBox="0 0 24 24" fill="none" stroke="#fff" stroke-width="2" stroke-linecap="round" stroke-linejoin="round"><path d="M12 3H5a2 2 0 0 0-2 2v14a2 2 0 0 0 2 2h14a2 2 0 0 0 2-2v-7"/><path d="M18.375 2.625a1 1 0 0 1 3 3l-9.013 9.014a2 2 0 0 1-.853.505l-2.873.84a.5.5 0 0 1-.62-.62l.84-2.873a2 2 0 0 1 .506-.852z"/></svg>
<div class="abs" style="left:557.5px;top:290px;font-size:16px;letter-spacing:0.7px;line-height:20px;white-space:nowrap;color:#f4f4f5">0:00 / 0:03</div>

<!-- waveform -->
<svg class="abs" style="left:0;top:0" width="1171" height="800" viewBox="0 0 1171 800">
<rect x="179.7" y="331" width="2.2" height="142" fill="#84878e"/>
<rect x="640.7" y="331" width="2.2" height="142" fill="#84878e"/>
<rect x="191.20" y="367.6" width="2.2" height="68.8" rx="1" fill="#a9abb2"/>
<rect x="196.76" y="340.5" width="2.2" height="123.0" rx="1" fill="#a9abb2"/>
<rect x="202.31" y="336.0" width="2.2" height="132.0" rx="1" fill="#a9abb2"/>
<rect x="207.87" y="341.0" width="2.2" height="122.0" rx="1" fill="#a9abb2"/>
<rect x="213.42" y="350.0" width="2.2" height="104.0" rx="1" fill="#a9abb2"/>
<rect x="218.98" y="359.0" width="2.2" height="86.0" rx="1" fill="#a9abb2"/>
<rect x="224.54" y="387.0" width="2.2" height="30.0" rx="1" fill="#a9abb2"/>
<rect x="230.09" y="356.5" width="2.2" height="91.0" rx="1" fill="#a9abb2"/>
<rect x="235.65" y="350.0" width="2.2" height="104.0" rx="1" fill="#a9abb2"/>
<rect x="241.20" y="396.0" width="2.2" height="12.0" rx="1" fill="#a9abb2"/>
<rect x="246.76" y="368.0" width="2.2" height="68.0" rx="1" fill="#a9abb2"/>
<rect x="252.42" y="401.0" width="2" height="2" fill="#9a9ca3"/>
<rect x="257.87" y="396.0" width="2.2" height="12.0" rx="1" fill="#a9abb2"/>
<rect x="263.43" y="390.0" width="2.2" height="24.0" rx="1" fill="#a9abb2"/>
<rect x="268.98" y="389.0" width="2.2" height="26.0" rx="1" fill="#a9abb2"/>
<rect x="274.54" y="358.4" width="2.2" height="87.2" rx="1" fill="#a9abb2"/>
<rect x="280.10" y="356.3" width="2.2" height="91.4" rx="1" fill="#a9abb2"/>
<rect x="285.65" y="346.3" width="2.2" height="111.4" rx="1" fill="#a9abb2"/>
<rect x="291.21" y="331.0" width="2.2" height="142.0" rx="1" fill="#a9abb2"/>
<rect x="296.76" y="349.4" width="2.2" height="105.2" rx="1" fill="#a9abb2"/>
<rect x="302.32" y="382.4" width="2.2" height="39.2" rx="1" fill="#a9abb2"/>
<rect x="307.88" y="385.0" width="2.2" height="34.0" rx="1" fill="#a9abb2"/>
<rect x="313.43" y="376.0" width="2.2" height="52.0" rx="1" fill="#a9abb2"/>
<rect x="318.99" y="394.0" width="2.2" height="16.0" rx="1" fill="#a9abb2"/>
<rect x="324.54" y="392.0" width="2.2" height="20.0" rx="1" fill="#a9abb2"/>
<rect x="330.10" y="377.3" width="2.2" height="49.4" rx="1" fill="#a9abb2"/>
<rect x="335.66" y="348.0" width="2.2" height="108.0" rx="1" fill="#a9abb2"/>
<rect x="341.21" y="356.5" width="2.2" height="91.0" rx="1" fill="#a9abb2"/>
<rect x="346.77" y="379.3" width="2.2" height="45.4" rx="1" fill="#a9abb2"/>
<rect x="352.32" y="387.5" width="2.2" height="29.0" rx="1" fill="#a9abb2"/>
<rect x="357.98" y="401.0" width="2" height="2" fill="#9a9ca3"/>
<rect x="363.44" y="391.0" width="2.2" height="22.0" rx="1" fill="#a9abb2"/>
<rect x="368.99" y="359.0" width="2.2" height="86.0" rx="1" fill="#a9abb2"/>
<rect x="374.55" y="346.0" width="2.2" height="112.0" rx="1" fill="#a9abb2"/>
<rect x="380.10" y="341.0" width="2.2" height="122.0" rx="1" fill="#a9abb2"/>
<rect x="385.66" y="372.0" width="2.2" height="60.0" rx="1" fill="#a9abb2"/>
<rect x="391.22" y="382.0" width="2.2" height="40.0" rx="1" fill="#a9abb2"/>
<rect x="396.77" y="377.0" width="2.2" height="50.0" rx="1" fill="#a9abb2"/>
<rect x="402.33" y="397.0" width="2.2" height="10.0" rx="1" fill="#a9abb2"/>
<rect x="407.88" y="399.0" width="2.2" height="6.0" rx="1" fill="#a9abb2"/>
<rect x="413.44" y="362.0" width="2.2" height="80.0" rx="1" fill="#a9abb2"/>
<rect x="419.00" y="386.0" width="2.2" height="32.0" rx="1" fill="#a9abb2"/>
<rect x="424.55" y="389.0" width="2.2" height="26.0" rx="1" fill="#a9abb2"/>
<rect x="430.11" y="387.5" width="2.2" height="29.0" rx="1" fill="#a9abb2"/>
<rect x="435.66" y="370.0" width="2.2" height="64.0" rx="1" fill="#a9abb2"/>
<rect x="441.22" y="354.0" width="2.2" height="96.0" rx="1" fill="#a9abb2"/>
<rect x="446.78" y="368.0" width="2.2" height="68.0" rx="1" fill="#a9abb2"/>
<rect x="452.33" y="390.0" width="2.2" height="24.0" rx="1" fill="#a9abb2"/>
<rect x="457.89" y="380.0" width="2.2" height="44.0" rx="1" fill="#a9abb2"/>
<rect x="463.44" y="380.0" width="2.2" height="44.0" rx="1" fill="#a9abb2"/>
<rect x="469.00" y="369.0" width="2.2" height="66.0" rx="1" fill="#a9abb2"/>
<rect x="474.56" y="366.0" width="2.2" height="72.0" rx="1" fill="#a9abb2"/>
<rect x="480.11" y="366.0" width="2.2" height="72.0" rx="1" fill="#a9abb2"/>
<rect x="485.67" y="375.0" width="2.2" height="54.0" rx="1" fill="#a9abb2"/>
<rect x="491.22" y="396.5" width="2.2" height="11.0" rx="1" fill="#a9abb2"/>
<rect x="496.78" y="387.7" width="2.2" height="28.6" rx="1" fill="#a9abb2"/>
<rect x="502.34" y="365.0" width="2.2" height="74.0" rx="1" fill="#a9abb2"/>
<rect x="507.89" y="379.0" width="2.2" height="46.0" rx="1" fill="#a9abb2"/>
<rect x="513.45" y="380.0" width="2.2" height="44.0" rx="1" fill="#a9abb2"/>
<rect x="519.00" y="375.0" width="2.2" height="54.0" rx="1" fill="#a9abb2"/>
<rect x="524.56" y="399.0" width="2.2" height="6.0" rx="1" fill="#a9abb2"/>
<rect x="530.22" y="401.0" width="2" height="2" fill="#9a9ca3"/>
<rect x="535.67" y="357.0" width="2.2" height="90.0" rx="1" fill="#a9abb2"/>
<rect x="541.23" y="342.0" width="2.2" height="120.0" rx="1" fill="#a9abb2"/>
<rect x="546.78" y="361.5" width="2.2" height="81.0" rx="1" fill="#a9abb2"/>
<rect x="552.34" y="388.0" width="2.2" height="28.0" rx="1" fill="#a9abb2"/>
<rect x="557.90" y="361.5" width="2.2" height="81.0" rx="1" fill="#a9abb2"/>
<rect x="563.45" y="359.4" width="2.2" height="85.2" rx="1" fill="#a9abb2"/>
<rect x="569.01" y="358.0" width="2.2" height="88.0" rx="1" fill="#a9abb2"/>
<rect x="574.56" y="371.0" width="2.2" height="62.0" rx="1" fill="#a9abb2"/>
<rect x="580.12" y="377.0" width="2.2" height="50.0" rx="1" fill="#a9abb2"/>
<rect x="585.68" y="388.0" width="2.2" height="28.0" rx="1" fill="#a9abb2"/>
<rect x="591.33" y="401.0" width="2" height="2" fill="#9a9ca3"/>
<rect x="596.89" y="401.0" width="2" height="2" fill="#9a9ca3"/>
<rect x="602.34" y="397.0" width="2.2" height="10.0" rx="1" fill="#a9abb2"/>
<rect x="607.90" y="397.0" width="2.2" height="10.0" rx="1" fill="#a9abb2"/>
<rect x="613.56" y="401.0" width="2" height="2" fill="#9a9ca3"/>
<rect x="619.11" y="401.0" width="2" height="2" fill="#9a9ca3"/>
<rect x="624.67" y="401.0" width="2" height="2" fill="#9a9ca3"/>
<path d="M170.5 387.2 H188.6 a4 4 0 0 1 4 4 V411.7 a4 4 0 0 1 -4 4 H170.5Z" fill="#1f2734"/>
<g fill="#b8bcc4"><circle cx="177.6" cy="397.4" r="1.2"/><circle cx="181.6" cy="397.4" r="1.2"/><circle cx="177.6" cy="401.9" r="1.2"/><circle cx="181.6" cy="401.9" r="1.2"/><circle cx="177.6" cy="406.4" r="1.2"/><circle cx="181.6" cy="406.4" r="1.2"/></g>
<path d="M630.7 387.2 H650.5 V415.7 H630.7 a4 4 0 0 1 -4 -4 V391.2 a4 4 0 0 1 4 -4Z" fill="#1f2734"/>
<g fill="#b8bcc4"><circle cx="638.8" cy="397.4" r="1.2"/><circle cx="642.8" cy="397.4" r="1.2"/><circle cx="638.8" cy="401.9" r="1.2"/><circle cx="642.8" cy="401.9" r="1.2"/><circle cx="638.8" cy="406.4" r="1.2"/><circle cx="642.8" cy="406.4" r="1.2"/></g>
</svg>

<!-- selects -->
<div class="sel" style="top:217px;width:147px">V2.7 Model</div>
<div class="sel" style="top:270.5px;width:202px">Standard Resolution</div>
<div class="sel" style="top:323.5px;width:248.5px;color:#7a7a7a;font-size:16.66px">Modes not supported for V2.7</div>
<div class="sel" style="top:376.5px;width:177.5px;box-shadow:0 0 0 2.5px #141414,0 0 0 4.8px #333333">Most Expressive</div>
<svg class="ic" style="left:829px;top:227.5px" width="18" height="18" viewBox="0 0 24 24" fill="none" stroke="#a1a1aa" stroke-width="2" stroke-linecap="round" stroke-linejoin="round"><path d="m6 9 6 6 6-6"/></svg>
<svg class="ic" style="left:884.5px;top:281px" width="18" height="18" viewBox="0 0 24 24" fill="none" stroke="#a1a1aa" stroke-width="2" stroke-linecap="round" stroke-linejoin="round"><path d="m6 9 6 6 6-6"/></svg>
<svg class="ic" style="left:857.5px;top:387px" width="18" height="18" viewBox="0 0 24 24" fill="none" stroke="#a1a1aa" stroke-width="2" stroke-linecap="round" stroke-linejoin="round"><path d="m18 15-6-6-6 6"/></svg>

<!-- dropdown menu -->
<div class="abs" style="left:713.5px;top:421.5px;width:355px;height:148px;background:#0d0d0b;border:1px solid #232323;border-radius:7px;box-shadow:0 2px 6px rgba(0,0,0,.3)">
  <div class="abs" style="left:4.5px;top:4.5px;width:344.5px;height:40px;background:#27272a;border-radius:6px"></div>
  <div class="abs" style="left:18.5px;top:13.2px;font-size:16.3px;line-height:20px;white-space:nowrap;color:#f4f4f5">Most Expressive</div>
  <div class="abs" style="left:18.5px;top:53.2px;font-size:16.3px;line-height:20px;white-space:nowrap;color:#85857f">Medium Expressive</div>
  <div class="abs" style="left:18.5px;top:93.2px;font-size:16.3px;line-height:20px;white-space:nowrap;color:#85857f">Least Expressive</div>
  <div class="abs" style="left:18.5px;top:115.3px;font-size:14.25px;line-height:18px;white-space:nowrap;color:#5a5a55">Can reduce distortions at the expense of lip sync</div>
</div>
<svg class="ic" style="left:1032.5px;top:436.5px" width="18" height="18" viewBox="0 0 24 24" fill="none" stroke="#e4e4e7" stroke-width="2" stroke-linecap="round" stroke-linejoin="round"><path d="M20 6 9 17l-5-5"/></svg>

<!-- side toggle -->
<div class="abs" style="left:1145.5px;top:620.5px;width:60px;height:71px;border:1.5px solid #404040;border-radius:24px;background:#0d0d0d"></div>
<svg class="ic" style="left:1152px;top:643px" width="26" height="26" viewBox="0 0 24 24" fill="none" stroke="#fff" stroke-width="2" stroke-linecap="round" stroke-linejoin="round"><path d="m15 18-6-6 6-6"/></svg>

<!-- project videos -->
<div class="abs" style="left:290.5px;top:648.5px;font-size:34.2px;font-weight:700;line-height:40px;white-space:nowrap;color:#f4f4f5">Project Videos</div>
<div class="abs" style="left:215px;top:727px;font-size:18px;font-weight:700;line-height:22px;white-space:nowrap;color:#f4f4f5">You have not made any videos in this project.</div>

<div class="abs" style="left:1057px;top:779px;font-size:11.8px;line-height:14px;white-space:nowrap;color:#e0e0e0;text-shadow:0 0 2px #000">www.aicreators.tools</div>
</div>
</body></html>
